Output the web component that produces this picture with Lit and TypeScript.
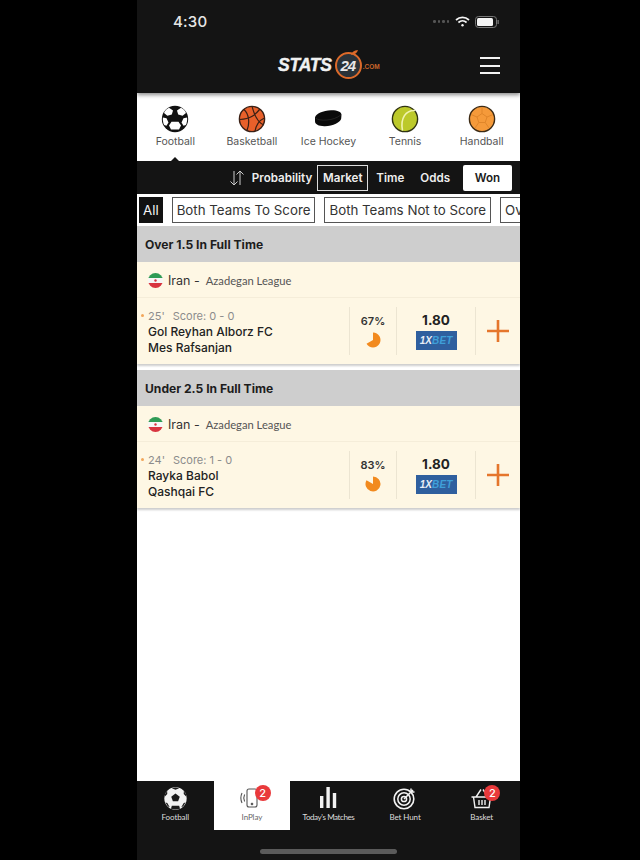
import { LitElement, html, css, svg } from "lit";
import { customElement } from "lit/decorators.js";

const soccer = (size: number) => html`<svg width=${size} height=${size} viewBox="0 0 28 28">
  <circle cx="14" cy="14" r="13.2" fill="#111"/>
  <path d="M8 2.800 12 5.500 10.800 9.500 6.400 10.800 3 8C4 5.600 5.800 3.800 8 2.800Z" fill="#fff"/>
  <path d="M20 2.800 16 5.500 17.200 9.500 21.600 10.800 25 8C24 5.600 22.200 3.800 20 2.800Z" fill="#fff"/>
  <path d="M10.500 16.800H17.500L20 20.500 18 24.500H10L8 20.500Z" fill="#fff"/>
  <path d="M1.900 12.500 5.500 13.200 7.500 17.500 5.500 20.800 3.200 20C2 17.600 1.600 15 1.900 12.500Z" fill="#fff"/>
  <path d="M26.100 12.500 22.500 13.200 20.500 17.500 22.500 20.800 24.800 20C26 17.600 26.400 15 26.100 12.500Z" fill="#fff"/>
</svg>`;

const tabSoccer = html`<svg width="23" height="23" viewBox="0 0 28 28">
  <circle cx="14" cy="14" r="13.600" fill="#f2f2f2"/>
  <polygon points="14,8 19.200,11.800 17.200,17.400 10.800,17.400 8.800,11.800" fill="#1a1a1a"/>
  <path d="M9.500 1.500 14 3.400 18.500 1.500 14 .6Z M.8 12 4 8.600 3.800 5 1 9ZM27.200 12 24 8.600 24.200 5 27 9Z M4 19.400 7 24.600 4.500 23.500 1.800 18.800ZM24 19.400 21 24.600 23.500 23.500 26.200 18.800Z M9.500 22.800H18.500L19.500 26.500 14 27.500 8.500 26.500Z" fill="#1a1a1a"/>
</svg>`;

const basketball = html`<svg width="28" height="28" viewBox="0 0 28 28">
  <circle cx="14" cy="14" r="12.600" fill="#e8602a" stroke="#3a2015" stroke-width="1.400"/>
  <path d="M6 4.500C11 9 12 18 9 25.500M22 4C17 10 13 14 1.800 14.500M14 1.400C16 9 20 18 26 20M26.500 13C22 15 18 20 17 26.400" stroke="#3a2015" stroke-width="1.200" fill="none"/>
</svg>`;

const puck = html`<svg width="28" height="28" viewBox="0 0 28 28">
  <path d="M1 12.500C2 8.500 9 5.500 17 5.200 23 5 27.400 6.800 27.500 9.600L27.200 13.500C26.600 17.400 19 21 11 21.200 5 21.400 .8 19.300 1 16Z" fill="#0a0a0a"/>
  <path d="M1.500 13C5 16.600 20 16 27 9.800" stroke="#333" stroke-width=".6" fill="none"/>
</svg>`;

const tennis = html`<svg width="28" height="28" viewBox="0 0 28 28">
  <circle cx="14" cy="14" r="12.600" fill="#bcc92a" stroke="#2f3212" stroke-width="1.400"/>
  <path d="M24 5.500C15 5 9 13 11.500 25.600" stroke="#f1f3b0" stroke-width="1.600" fill="none"/>
</svg>`;

const handball = html`<svg width="28" height="28" viewBox="0 0 28 28">
  <circle cx="14" cy="14" r="12.600" fill="#f59a3a" stroke="#3c2a14" stroke-width="1.400"/>
  <path d="M14 8.500 19 12 17.200 17.500H10.800L9 12ZM14 8.500V2M19 12 25 9.500M17.200 17.500 21 23M10.800 17.500 7 23M9 12 3 9.500" stroke="#e0862a" stroke-width="1" fill="none"/>
</svg>`;

const flag = html`<svg class="flag" width="15" height="15" viewBox="0 0 15 15">
  <defs><clipPath id="fc"><circle cx="7.500" cy="7.500" r="7.500"/></clipPath></defs>
  <g clip-path="url(#fc)">
    <rect width="15" height="5" fill="#2f9b55"/><rect y="5" width="15" height="5" fill="#f6f6f6"/><rect y="10" width="15" height="5" fill="#d8343f"/>
    <circle cx="7.500" cy="7.500" r="1.200" fill="#d8343f"/>
  </g>
</svg>`;

const pie = (deg: number) => {
  const a = (deg * Math.PI) / 180;
  const x = 8 + 7.500 * Math.sin(a);
  const y = 8 - 7.500 * Math.cos(a);
  return html`<svg width="16" height="16" viewBox="0 0 16 16">${svg`<path d="M8 8V.5A7.500 7.500 0 ${deg > 180 ? 1 : 0} 1 ${x} ${y}Z" fill="#f28a1e"/>`}</svg>`;
};

const tabIcons = {
  phone: html`<svg width="26" height="24" viewBox="0 0 26 24" fill="none" stroke="#555">
    <rect x="8" y="3" width="10" height="18" rx="2" stroke-width="1.100"/><circle cx="13" cy="18" r=".9" fill="#333"/>
    <path d="M5.600 8.500C4.400 11 4.400 13 5.600 15.500M3 7C1.400 10.500 1.400 13.500 3 17" stroke-width="1.100"/>
  </svg>`,
  bars: html`<svg width="24" height="24" viewBox="0 0 24 24" fill="#f2f2f2">
    <rect x="4" y="10" width="3.400" height="12"/><rect x="10.400" y="1" width="3.400" height="21"/><rect x="16.800" y="7" width="3.400" height="15"/>
  </svg>`,
  target: html`<svg width="24" height="24" viewBox="0 0 24 24" fill="none" stroke="#f2f2f2">
    <circle cx="11" cy="13" r="9.800" stroke-width="1.600"/><circle cx="11" cy="13" r="6.200" stroke-width="1.500"/><circle cx="11" cy="13" r="2.600" stroke-width="1.500"/>
    <path d="M11 13 20 4M18 2.500V6H21.500" stroke-width="1.500"/>
  </svg>`,
  basket: html`<svg width="24" height="24" viewBox="0 0 24 24" fill="none" stroke="#f2f2f2" stroke-width="1.400">
    <path d="M1.500 11H22.500M3.500 11 5 21.500H19L20.500 11M6 11 11 3.500M18 11 13 3.500M9 14V19M12 14V19M15 14V19"/>
  </svg>`,
};

@customElement("app-root")
export class AppRoot extends LitElement {
  static styles = css`
    :host { display: block; width: 640px; height: 860px; background: #000; font-family: Inter, "Liberation Sans", sans-serif; overflow: hidden; }
    .phone { width: 383px; height: 860px; margin-left: 137px; background: #fff; display: flex; flex-direction: column; overflow: hidden; }
    .top { height: 93px; background: #141414; color: #fff; display: flex; flex-direction: column; box-sizing: border-box; flex: none; box-shadow: 0 2px 4px rgba(0,0,0,.45); position: relative; z-index: 1; }
    .status { height: 43px; display: flex; align-items: center; justify-content: space-between; padding: 0 21px 0 36px; }
    .time { font-size: 15px; font-weight: 500; color: #e6e6e6; letter-spacing: .2px; }
    .st-icons { display: flex; align-items: center; gap: 5px; }
    .dots { display: flex; gap: 2px; margin-right: 1px; }
    .dots i { width: 2.500px; height: 2.500px; border-radius: 50%; background: #555; }
    .head { display: flex; align-items: center; flex: 1; position: relative; padding: 0 0 6px 141px; }
    .logo { display: flex; align-items: center; }
    .stats { font: italic 900 17.500px "Liberation Sans", sans-serif; color: #f1f1f1; letter-spacing: -.2px; -webkit-text-stroke: .4px #f1f1f1; }
    .ring-wrap { position: relative; display: flex; margin-left: 3px; }
    .leaf { position: absolute; right: 4px; top: -2px; }
    .ring { width: 27px; height: 27px; border: 2.500px solid #dc6a2a; border-radius: 50%; box-sizing: border-box; display: flex; align-items: center; justify-content: center; font: italic 900 15px "Liberation Sans", sans-serif; color: #e8e8e8; background: #2a3238; letter-spacing: -1px; padding-right: 1px; }
    .com { font: 700 6.500px "Liberation Sans", sans-serif; color: #c9642a; margin-left: 1px; margin-top: 3px; }
    .menu { position: absolute; right: 20px; top: 14px; width: 20px; height: 17px; display: flex; flex-direction: column; justify-content: space-between; }
    .menu i { height: 2px; background: #f2f2f2; display: block; }
    .sports { height: 68px; display: grid; grid-template-columns: repeat(5, 1fr); background: #fff; flex: none; box-sizing: border-box; padding: 12px 0 0; position: relative; }
    .sport { display: flex; flex-direction: column; align-items: center; gap: 2px; font-size: 10.500px; color: #555; }
    .caret { position: absolute; left: 34px; bottom: 0; width: 0; height: 0; border-left: 4px solid transparent; border-right: 4px solid transparent; border-bottom: 4px solid #141414; }
    .filters { height: 33px; background: #141414; flex: none; display: flex; align-items: center; justify-content: flex-end; color: #eee; font-size: 11.600px; font-weight: 600; padding-right: 8px; }
    .arrows { margin-right: 7px; display: block; }
    .f { display: flex; align-items: center; justify-content: center; height: 26px; box-sizing: border-box; }
    .f.market { width: 51px; border: 1px solid #ddd; margin-left: 5px; }
    .f.time2 { margin-left: 8px; }
    .f.odds { margin-left: 16px; }
    .f.won { width: 49px; background: #fff; color: #1a1a1a; border-radius: 2px; margin-left: 13px; }
    .chips { height: 32px; flex: none; display: flex; align-items: center; gap: 9px; padding-left: 2px; overflow: hidden; font-size: 13.300px; color: #333; background: #fff; }
    .chip { border: 1px solid #555; height: 26px; display: flex; align-items: center; padding: 0 4px; flex: none; box-sizing: border-box; }
    .chip.all { background: #111; color: #f4f4f4; border-color: #111; padding: 0 3px; }
    .group { height: 36px; background: #cecece; display: flex; align-items: center; padding-left: 8px; font-size: 12.100px; font-weight: 700; color: #1d1d1d; flex: none; }
    .card { height: 102px; background: #fef7e4; flex: none; display: flex; flex-direction: column; box-shadow: 0 2px 2px rgba(0,0,0,.2); }
    .gap { height: 6px; flex: none; }
    .league { height: 36px; display: flex; align-items: center; padding: 2px 0 0 11px; box-sizing: border-box; border-bottom: 1px solid #f5edd9; flex: none; }
    .country { font-size: 12.500px; color: #333; margin-left: 5px; }
    .lname { font-size: 11.200px; color: #555; margin-left: 6px; font-family: Lato, sans-serif; }
    .match { flex: 1; display: grid; grid-template-columns: 212px 47px 79px 45px; align-items: stretch; }
    .info { padding: 9px 0 0 11px; position: relative; font-size: 12px; color: #222; font-weight: 500; line-height: 16px; }
    .dot { position: absolute; left: 4px; top: 16px; width: 3px; height: 3px; border-radius: 50%; background: #f2a65a; }
    .meta { color: #8c8c8c; font-weight: 400; font-size: 11px; display: flex; gap: 8px; margin-bottom: 0; padding-top: 1px; }
    .pct, .odd, .plus { border-left: 1px solid #ece5d2; margin: 9px 0 9px; display: flex; flex-direction: column; align-items: center; }
    .pct { font-size: 11px; color: #333; font-weight: 600; gap: 4px; padding-top: 7px; }
    .odd { font-size: 13.500px; font-weight: 700; color: #222; gap: 3px; padding-top: 5px; }
    .xbet { width: 41px; height: 19px; background: #2f5f9e; display: flex; align-items: center; justify-content: center; font: italic 900 10px "Liberation Sans", sans-serif; color: #e8eef6; letter-spacing: .1px; }
    .xbet span { color: #3f9fd8; }
    .plus { justify-content: center; }
    .rest { flex: 1; }
    .tabs { height: 79px; background: #141414; flex: none; position: relative; }
    .tabrow { display: grid; grid-template-columns: repeat(5, 1fr); height: 49px; }
    .tab { display: flex; flex-direction: column; align-items: center; position: relative; padding-top: 5px; font: 8px/10px Lato, sans-serif; letter-spacing: -.1px; color: #ddd; box-sizing: border-box; gap: 2px; }
    .tab .tight { letter-spacing: -.4px; }
    .tab .ic { height: 24px; display: flex; align-items: center; justify-content: center; }
    .tab.on { background: #fff; color: #666; }
    .badge { position: absolute; top: 4px; left: 41px; width: 16px; height: 16px; border-radius: 50%; background: #e9393b; color: #fff; font: 500 11px Inter, sans-serif; display: flex; align-items: center; justify-content: center; }
    .home { position: absolute; left: 123px; bottom: 6px; width: 137px; height: 5px; border-radius: 3px; background: #5a5a5a; }
  `;

  private card(minute: string, score: string, a: string, b: string, p: number, deg: number) {
    return html`<div class="card">
      <div class="league">${flag}<span class="country">Iran -</span><span class="lname">Azadegan League</span></div>
      <div class="match">
        <div class="info"><i class="dot"></i><div class="meta"><span>${minute}</span><span>Score: ${score}</span></div><div>${a}</div><div>${b}</div></div>
        <div class="pct"><span>${p}%</span>${pie(deg)}</div>
        <div class="odd"><span>1.80</span><div class="xbet">1X<span>BET</span></div></div>
        <div class="plus"><svg width="24" height="24" viewBox="0 0 24 24"><path d="M12 1V23M1 12H23" stroke="#e5762c" stroke-width="2.600"/></svg></div>
      </div>
    </div>`;
  }

  render() {
    return html`<div class="phone">
      <div class="top">
        <div class="status">
          <span class="time">4:30</span>
          <div class="st-icons">
            <div class="dots"><i></i><i></i><i></i><i></i></div>
            <svg width="15" height="11" viewBox="0 0 15 11" fill="none" stroke="#f5f5f5" stroke-width="1.700"><path d="M1 4C4.800 .6 10.200 .6 14 4M3.400 6.500C5.800 4.400 9.200 4.400 11.600 6.500"/><circle cx="7.500" cy="9.300" r="1.200" fill="#f5f5f5" stroke="none"/></svg>
            <svg width="24" height="12" viewBox="0 0 24 12"><rect x=".5" y=".5" width="21" height="11" rx="3" fill="none" stroke="#777"/><rect x="2" y="2" width="16" height="8" rx="1.500" fill="#f5f5f5"/><rect x="22.500" y="4" width="1.300" height="4" fill="#777"/></svg>
          </div>
        </div>
        <div class="head">
          <div class="logo">
            <span class="stats">STATS</span>
            <div class="ring-wrap"><span class="ring">24</span><svg class="leaf" width="7" height="5" viewBox="0 0 7 5"><path d="M0 5C1 2 3 .5 7 0 6 3 4 4.500 0 5Z" fill="#dc6a2a"/></svg></div>
            <span class="com">.COM</span>
          </div>
          <div class="menu"><i></i><i></i><i></i></div>
        </div>
      </div>
      <div class="sports">
        <div class="sport">${soccer(28)}<span>Football</span></div>
        <div class="sport">${basketball}<span>Basketball</span></div>
        <div class="sport">${puck}<span>Ice Hockey</span></div>
        <div class="sport">${tennis}<span>Tennis</span></div>
        <div class="sport">${handball}<span>Handball</span></div>
        <i class="caret"></i>
      </div>
      <div class="filters">
        <svg class="arrows" width="16" height="16" viewBox="0 0 16 16" fill="none" stroke="#ccc" stroke-width="1"><path d="M5 1V15M1.500 11.500 5 15 8.500 11.500M11 15V1M7.500 4.500 11 1 14.500 4.500"/></svg>
        <span>Probability</span>
        <div class="f market">Market</div>
        <div class="f time2">Time</div>
        <div class="f odds">Odds</div>
        <div class="f won">Won</div>
      </div>
      <div class="chips">
        <div class="chip all">All</div>
        <div class="chip">Both Teams To Score</div>
        <div class="chip">Both Teams Not to Score</div>
        <div class="chip">Over 1.5</div>
      </div>
      <div class="group">Over 1.5 In Full Time</div>
      ${this.card("25'", "0 - 0", "Gol Reyhan Alborz FC", "Mes Rafsanjan", 67, 240)}
      <div class="gap"></div>
      <div class="group">Under 2.5 In Full Time</div>
      ${this.card("24'", "1 - 0", "Rayka Babol", "Qashqai FC", 83, 300)}
      <div class="rest"></div>
      <div class="tabs">
        <div class="tabrow">
          <div class="tab"><div class="ic">${tabSoccer}</div><span>Football</span></div>
          <div class="tab on"><div class="ic">${tabIcons.phone}</div><span>InPlay</span><span class="badge">2</span></div>
          <div class="tab"><div class="ic">${tabIcons.bars}</div><span class="tight">Today's Matches</span></div>
          <div class="tab"><div class="ic">${tabIcons.target}</div><span>Bet Hunt</span></div>
          <div class="tab"><div class="ic">${tabIcons.basket}</div><span>Basket</span><span class="badge">2</span></div>
        </div>
        <div class="home"></div>
      </div>
    </div>`;
  }
}
